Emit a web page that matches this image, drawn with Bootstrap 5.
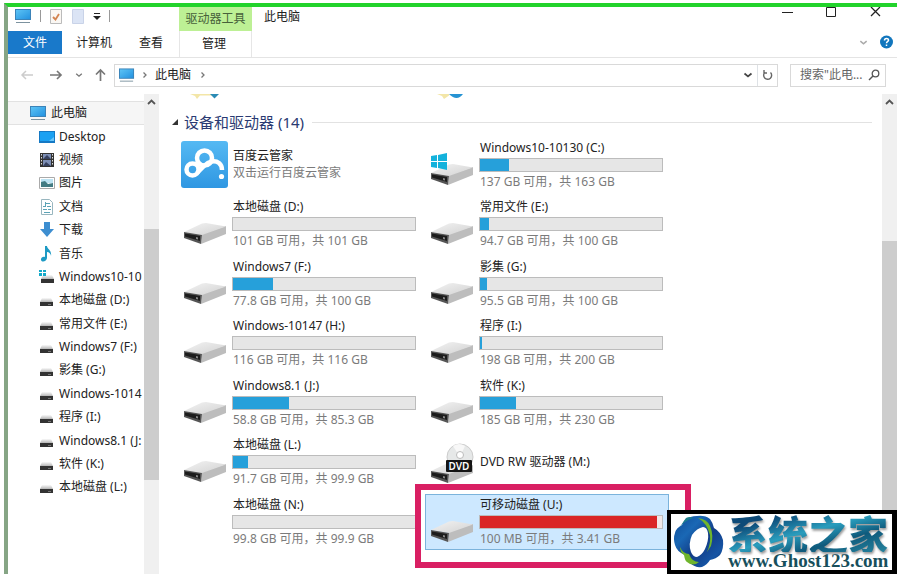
<!DOCTYPE html>
<html lang="zh-CN">
<head>
<meta charset="utf-8">
<meta name="viewport" content="width=device-width, initial-scale=1">
<title>此电脑</title>
<link href="https://cdn.jsdelivr.net/npm/bootstrap@5.3.0/dist/css/bootstrap.min.css" rel="stylesheet">
<style>
body{font-family:"Noto Sans","Noto Sans CJK SC",sans-serif;font-size:12px;line-height:16px;color:#222;background:#fff}
button,input{font:inherit;color:inherit}
button{background:none;border:0;padding:0}
a{color:inherit;text-decoration:none}
svg{display:block;flex:none}
.window{height:100vh;min-height:574px;margin-left:4px;padding-top:3px}
.frame{border-top:4px solid #22d32b;border-left:4px solid #86a585}
.ribbon{border-bottom:1px solid #e4e4e4;height:51px}
.quick{width:171px}
.quick-row{height:24px;padding:0 0 6px 7px}
.tab-row{height:23px}
.tab-row button{margin-right:14px}
.tab-row .file-tab{width:54px;background:#1979ca;color:#fff}
.tab-row .wide{margin-right:27px}
.sep{width:1px;height:12px;background:#999}
.ctx{width:73px}
.ctx-top{height:24px;background:#bdf095;color:#47613a}
.ctx-tab{height:26px;border:solid #e6e6e6;border-width:0 1px}
.ctx-tab span{margin-right:3px}
.win-title{padding-top:2px}
.win-btns button{width:44px;height:20px}
.address{height:36px;padding:0 11px 2px 12px}
.box{border:1px solid #d9d9d9;height:23px}
.nav-btn{width:29px}
.nav-small{padding-right:12px}
.search{width:96px;padding-left:9px;margin-left:12px}
.search input{width:64px;border:0;padding:0;outline:0;background:none;color:#555}
.search input::placeholder{color:#666;opacity:1}
.side{width:136px;padding-top:7px}
.side a{white-space:nowrap;overflow:hidden}
.side-root{height:24px;background:#f6f6f6;border:solid #e2e2e2;border-width:1px 0;padding-left:22px;gap:4px}
.side-list{min-height:374px;padding-left:31px}
.side-list a{gap:4px}
.track{width:15px;background:#f0f0f0}
.track button{height:17px}
.thumb{background:#cdcdcd}
.side-track .before{flex:118}
.side-track .thumb{flex:251}
.side-track .after{flex:94}
.main-track .before{flex:130}
.main-track .thumb{flex:333}
.folders{height:6px;padding-left:31px;gap:217px}
.group{font-size:15px;line-height:20px;color:#2a3a72;padding:0 10px 0 12px;margin-top:12px;height:20px}
.group-line{height:1px;background:#e2e2e2}
.drives{display:grid;grid-template-columns:repeat(auto-fill,247px);grid-auto-rows:1fr;min-height:416px;padding-left:19px;margin-top:5px}
.drive{display:flex;position:relative;width:244px;height:56px;border:1px solid transparent;padding:0 4px 0 2px;gap:3px}
.drive-text{padding:2px 0;flex:1}
.drive-text span{display:block;padding-left:1px;white-space:nowrap}
.sub{color:#7b7b7b;line-height:18px}
.progress{--bs-progress-height:14px;--bs-progress-bg:#e6e6e6;--bs-progress-border-radius:0;--bs-progress-bar-bg:#26a0da;border:1px solid #bcbcbc;margin:2px 0 1px;width:184px}
.picked{background:#cde8ff;border-color:#7bb3dc}
.picked .progress{--bs-progress-bar-bg:#da2626;--bs-progress-bg:#f1e8e8}
.callout{position:absolute;left:-11px;top:-11px;right:-23px;bottom:-19px;border:6px solid #d91f63}
.brand{position:absolute;right:0;bottom:0;width:230px;height:64px;border:4px solid #000;border-right-width:5px;background:#fff}
.brand-name{font:900 40px/38px "Noto Sans CJK SC",sans-serif;background:linear-gradient(165deg,#0d4a78 20%,#2a9dbd 48%,#0f5a7c 70%,#2685a0);-webkit-background-clip:text;background-clip:text;color:transparent;filter:drop-shadow(1px 2px 1px #999)}
.brand-url{font:700 19px/18px "Liberation Serif",serif;color:#174f5c}
</style>
<script src="https://cdn.jsdelivr.net/npm/bootstrap@5.3.0/dist/js/bootstrap.bundle.min.js"></script>
</head>
<body>
<svg width="0" height="0" class="position-absolute" aria-hidden="true">
  <defs>
    <linearGradient id="screen" x2="1" y2="1"><stop stop-color="#5cc3f5"/><stop offset="1" stop-color="#2492e0"/></linearGradient>
    <linearGradient id="lid" x2="1" y2="1"><stop stop-color="#f3f3f3"/><stop offset="1" stop-color="#d2d2d2"/></linearGradient>
    <linearGradient id="sky" x2="0" y2="1"><stop stop-color="#55b9f3"/><stop offset="1" stop-color="#2f97e2"/></linearGradient>
    <linearGradient id="mini" x2="0" y2="1"><stop stop-color="#fafafa"/><stop offset="1" stop-color="#b5b5b5"/></linearGradient>
  </defs>
  <symbol id="pc" viewBox="0 0 17 15"><path fill="#3b83b8" d="M0 0h16v11H0z"/><path fill="url(#screen)" d="M1 1h14v9H1z"/><path stroke="#7c929f" d="M1 13.500h14"/></symbol>
  <symbol id="disk" viewBox="0 0 48 53"><path fill="#bdbdbd" d="M21 37 45 29v8L20 47z"/><path fill="url(#lid)" d="M3 35 21 26.500l4-.5 20 3.500L21 38z"/><path fill="#555" d="m3 35 18 3-1 9-17-6z"/><path fill="#1c1c1c" d="m4 36.500 15 2.500v5L4 39.500z"/><path fill="#888" d="m15 40 2 .5v2l-2-.5z"/></symbol>
  <symbol id="mini-disk" viewBox="0 0 16 16"><path fill="url(#mini)" d="M3 6h9l2 4H1z"/><path fill="#333" d="M1 10h13v4H1z"/><path stroke="#777" d="M9 12.500h3"/></symbol>
  <symbol id="flag" viewBox="0 0 16 17"><path fill="#13b2dc" d="M0 3l6-1v6H0zM7 2l9-2v8H7zM0 9h6v6l-6-1zM7 9h9v8l-9-2z"/></symbol>
  <symbol id="down" viewBox="0 0 10 10"><path fill="none" stroke="currentColor" stroke-width="1.700" d="m1.500 3.500 3.500 3 3.500-3"/></symbol>
  <symbol id="right" viewBox="0 0 8 10"><path fill="none" stroke="#777" stroke-width="1.300" d="m2.500 2.500 2.500 2.500-2.500 2.500"/></symbol>
  <symbol id="arrow" viewBox="0 0 14 14"><path fill="none" stroke="currentColor" stroke-width="1.700" d="M1 7h11M8 3l4 4-4 4"/></symbol>
</svg>

<div class="window"><div class="frame h-100 d-flex flex-column position-relative overflow-hidden">
  <header class="ribbon d-flex">
    <div class="quick">
      <div class="quick-row d-flex align-items-center">
        <svg width="17" height="15"><use href="#pc"/></svg>
        <span class="sep ms-2"></span>
        <button class="ms-2" aria-label="属性"><svg width="14" height="15" viewBox="0 0 14 15"><path fill="#faf7f3" stroke="#bbb" d="M1.500.5h11v14h-11z"/><path fill="none" stroke="#d38451" stroke-width="1.800" d="m4 8 2.500 2.500L10 5"/></svg></button>
        <button class="ms-2" aria-label="新建文件夹"><svg width="14" height="15" viewBox="0 0 14 15"><path fill="#dbe4f5" stroke="#c9d3e8" d="M1.500.5h11v14h-11z"/></svg></button>
        <button class="ms-2" aria-label="自定义快速访问工具栏"><svg width="8" height="8" viewBox="0 0 8 8"><path stroke="#222" d="M1 1.500h6"/><path fill="#222" d="M0 4h8L4 8z"/></svg></button>
        <span class="sep ms-2"></span>
      </div>
      <nav class="tab-row d-flex align-items-stretch">
        <button class="file-tab">文件</button>
        <button class="wide">计算机</button>
        <button>查看</button>
      </nav>
    </div>
    <div class="ctx">
      <div class="ctx-top d-flex align-items-center justify-content-center">驱动器工具</div>
      <button class="ctx-tab w-100"><span>管理</span></button>
    </div>
    <div class="flex-fill d-flex flex-column justify-content-between">
      <div class="d-flex justify-content-between">
        <span class="win-title ps-2 ms-1">此电脑</span>
        <div class="win-btns d-flex">
          <button aria-label="最小化"><svg class="mx-auto mb-2 pb-1" width="11" height="15"><path stroke="#222" d="M0 5.500h11"/></svg></button>
          <button aria-label="最大化"><svg class="mx-auto mb-2 pb-1" width="11" height="15"><path fill="none" stroke="#222" d="M.500.500h9v9h-9z"/></svg></button>
          <button aria-label="关闭"><svg class="mx-auto mb-2 pb-1" width="11" height="15"><path stroke="#222" stroke-width="1.300" d="m1 0 9 9m0-9-9 9"/></svg></button>
        </div>
      </div>
      <div class="d-flex justify-content-end align-items-center gap-2 pb-1 mb-1">
        <button class="me-1" aria-label="展开功能区"><svg width="9" height="9" color="#aaa"><use href="#down"/></svg></button>
        <button aria-label="帮助"><svg class="me-1" width="13" height="14" viewBox="0 0 13 14"><circle cx="6.500" cy="7" r="6.500" fill="#1176bd"/><path fill="none" stroke="#fff" stroke-width="1.500" d="M4.500 5.500C4.500 3 8.500 3 8.500 5.200 8.500 6.500 6.500 6.500 6.500 8.300M6.500 9.500V11"/></svg></button>
      </div>
    </div>
  </header>

  <div class="address d-flex align-items-center">
    <button class="nav-btn" aria-label="后退"><svg width="14" height="14" viewBox="0 0 14 14" color="#ccc"><path fill="none" stroke="currentColor" stroke-width="1.500" d="M13 7H2m4-4L2 7l4 4"/></svg></button>
    <button class="nav-small" aria-label="前进"><svg width="14" height="14" color="#777"><use href="#arrow"/></svg></button>
    <button class="nav-small" aria-label="最近位置"><svg width="8" height="8" color="#777"><use href="#down"/></svg></button>
    <button class="pe-2" aria-label="向上"><svg width="11" height="14" viewBox="0 0 11 14" color="#777"><path fill="none" stroke="currentColor" stroke-width="1.700" d="M5.500 13V2M1 6.500 5.500 2 10 6.500"/></svg></button>
    <div class="box flex-fill d-flex align-items-center ps-1">
      <svg width="16" height="15"><use href="#pc"/></svg>
      <svg class="ms-1" width="12" height="10"><use href="#right"/></svg>
      <a class="ps-1" href="#">此电脑</a>
      <svg class="ms-2" width="8" height="10"><use href="#right"/></svg>
      <button class="ms-auto me-1" aria-label="历史记录"><svg width="10" height="10" color="#444"><use href="#down"/></svg></button>
      <button class="border-start h-100 px-1" aria-label="刷新"><svg width="11" height="12" viewBox="0 0 11 12"><path fill="none" stroke="#666" stroke-width="1.400" d="M8.500 3.500A4 4 0 1 1 3 3.300M2 1v3h3"/></svg></button>
    </div>
    <label class="box search d-flex align-items-center"><input type="text" placeholder="搜索&quot;此电..." aria-label="搜索此电脑"><svg class="ms-1" width="12" height="12" viewBox="0 0 12 12"><circle cx="7.500" cy="4.500" r="3.300" fill="none" stroke="#555" stroke-width="1.300"/><path stroke="#555" stroke-width="1.500" d="M5 7 1 11"/></svg></label>
  </div>

  <div class="d-flex flex-fill">
    <nav class="side">
      <a class="side-root d-flex align-items-center" href="#"><svg width="17" height="15"><use href="#pc"/></svg>此电脑</a>
      <div class="side-list d-flex flex-column">
        <a class="d-flex flex-fill align-items-center" href="#"><svg width="16" height="16" viewBox="0 0 16 16"><path fill="#1579c4" d="M0 2h16v12H0z"/><path fill="#1ba1f2" d="M1 3h14v9H1z"/><path fill="#6bc6fa" d="m10 12 5-4v4z"/></svg>Desktop</a>
        <a class="d-flex flex-fill align-items-center" href="#"><svg width="16" height="16" viewBox="0 0 16 16"><path fill="#333" d="M1 1h14v14H1z"/><path fill="#7d8fb6" d="M4 2h8v5H4zM4 8h8v6H4z"/><path fill="#36415f" d="m4 7 4-4 4 4zM4 14l3-4 5 4z"/><path stroke="#ddd" stroke-dasharray="1.500" d="M2.500 2v12M13.500 2v12"/></svg>视频</a>
        <a class="d-flex flex-fill align-items-center" href="#"><svg width="16" height="16" viewBox="0 0 16 16"><path fill="#fff" stroke="#aaa" d="M.500 2.500h15v11H.500z"/><path fill="#bce3f3" d="M2 4h12v4H2z"/><path fill="#427b83" d="m2 7 4-1 3 3 5-1v4H2z"/></svg>图片</a>
        <a class="d-flex flex-fill align-items-center" href="#"><svg width="16" height="16" viewBox="0 0 16 16"><path fill="#fff" stroke="#98b6bf" d="M2.500.500h8l3 3v12h-11z"/><path stroke="#5ba3b6" d="M7 4.500h4M4 7.500h3M8 7.500h4M4 10.500h4M9 10.500h3M5 13.500h6M6.500 3v4"/></svg>文档</a>
        <a class="d-flex flex-fill align-items-center" href="#"><svg width="16" height="16" viewBox="0 0 16 16"><path fill="#3d8ed0" d="M5 0h6v7h4l-7 8-7-8h4z"/></svg>下载</a>
        <a class="d-flex flex-fill align-items-center" href="#"><svg width="16" height="16" viewBox="0 0 16 16"><path fill="#1d9ac4" d="M6 0h2c0 3 5 4 4 10 0-2-2-4-4-4v6c0 3-5 5-6 2-.5-2 2-4 4-3z"/></svg>音乐</a>
        <a class="d-flex flex-fill align-items-center" href="#"><svg width="16" height="16" viewBox="0 0 16 16"><path fill="url(#mini)" d="M4 6h9l2 4H2z"/><path fill="#333" d="M2 10h13v4H2z"/><path fill="#13a9c9" d="M0 1h3v2H0zM4 1h3v2H4zM0 4h3v3H0zM4 4h3v3H4z"/></svg>Windows10-10</a>
        <a class="d-flex flex-fill align-items-center" href="#"><svg width="16" height="16"><use href="#mini-disk"/></svg>本地磁盘 (D:)</a>
        <a class="d-flex flex-fill align-items-center" href="#"><svg width="16" height="16"><use href="#mini-disk"/></svg>常用文件 (E:)</a>
        <a class="d-flex flex-fill align-items-center" href="#"><svg width="16" height="16"><use href="#mini-disk"/></svg>Windows7 (F:)</a>
        <a class="d-flex flex-fill align-items-center" href="#"><svg width="16" height="16"><use href="#mini-disk"/></svg>影集 (G:)</a>
        <a class="d-flex flex-fill align-items-center" href="#"><svg width="16" height="16"><use href="#mini-disk"/></svg>Windows-1014</a>
        <a class="d-flex flex-fill align-items-center" href="#"><svg width="16" height="16"><use href="#mini-disk"/></svg>程序 (I:)</a>
        <a class="d-flex flex-fill align-items-center" href="#"><svg width="16" height="16"><use href="#mini-disk"/></svg>Windows8.1 (J:</a>
        <a class="d-flex flex-fill align-items-center" href="#"><svg width="16" height="16"><use href="#mini-disk"/></svg>软件 (K:)</a>
        <a class="d-flex flex-fill align-items-center" href="#"><svg width="16" height="16"><use href="#mini-disk"/></svg>本地磁盘 (L:)</a>
      </div>
    </nav>
    <div class="track side-track d-flex flex-column"><button aria-label="向上滚动"><svg class="mx-auto" width="9" height="9" viewBox="0 0 9 9"><path fill="none" stroke="#555" stroke-width="1.800" d="m1 6 3.500-3.500L8 6"/></svg></button><div class="before"></div><div class="thumb"></div><div class="after"></div></div>

    <main class="flex-fill">
      <div class="folders d-flex">
        <svg width="30" height="6" viewBox="0 0 30 6"><path fill="#f3e6a8" d="M0 0h22v1.500H10L7 5 5 2z"/><path fill="#2b8bb5" d="M20 0h9l-4.500 4.500z"/></svg>
        <svg width="30" height="6" viewBox="0 0 30 6"><path fill="#f3e6a8" d="M0 0h12v1.500L7 5 5 2z"/><path fill="#2693d3" d="M12 0h14q-6 8-14 0z"/></svg>
      </div>
      <h1 class="group d-flex align-items-center mb-0 fw-normal"><svg class="me-1" width="9" height="8"><path fill="#333" d="M7 1v6H1z"/></svg><span class="me-2">设备和驱动器 (14)</span><span class="group-line flex-fill"></span></h1>
      <div class="drives">
        <a class="drive" href="#"><svg width="48" height="53" viewBox="0 0 48 53"><rect y="3" width="47" height="47" rx="3" fill="url(#sky)"/><g fill="none" stroke="#fff" stroke-width="4.500"><circle cx="11.500" cy="31.500" r="6"/><circle cx="23.500" cy="20" r="7.500"/><path d="m16 35 7-7c5-5 11-6 15-3 2.500 2 3 4 3 7"/></g><circle cx="40.500" cy="38.500" r="2.600" fill="#fff"/></svg>
          <div class="drive-text align-self-center"><span>百度云管家</span><span class="sub">双击运行百度云管家</span></div></a>
        <a class="drive" href="#"><svg width="48" height="53"><use href="#disk"/><use href="#flag" x="3" y="15" width="16" height="17"/></svg>
          <div class="drive-text"><span>Windows10-10130 (C:)</span><div class="progress"><div class="progress-bar" style="width:16%"></div></div><span class="sub">137 GB 可用，共 163 GB</span></div></a>
        <a class="drive" href="#"><svg width="48" height="53"><use href="#disk"/></svg>
          <div class="drive-text"><span>本地磁盘 (D:)</span><div class="progress"><div class="progress-bar" style="width:0%"></div></div><span class="sub">101 GB 可用，共 101 GB</span></div></a>
        <a class="drive" href="#"><svg width="48" height="53"><use href="#disk"/></svg>
          <div class="drive-text"><span>常用文件 (E:)</span><div class="progress"><div class="progress-bar" style="width:5%"></div></div><span class="sub">94.7 GB 可用，共 100 GB</span></div></a>
        <a class="drive" href="#"><svg width="48" height="53"><use href="#disk"/></svg>
          <div class="drive-text"><span>Windows7 (F:)</span><div class="progress"><div class="progress-bar" style="width:22%"></div></div><span class="sub">77.8 GB 可用，共 100 GB</span></div></a>
        <a class="drive" href="#"><svg width="48" height="53"><use href="#disk"/></svg>
          <div class="drive-text"><span>影集 (G:)</span><div class="progress"><div class="progress-bar" style="width:4%"></div></div><span class="sub">95.5 GB 可用，共 100 GB</span></div></a>
        <a class="drive" href="#"><svg width="48" height="53"><use href="#disk"/></svg>
          <div class="drive-text"><span>Windows-10147 (H:)</span><div class="progress"><div class="progress-bar" style="width:0%"></div></div><span class="sub">116 GB 可用，共 116 GB</span></div></a>
        <a class="drive" href="#"><svg width="48" height="53"><use href="#disk"/></svg>
          <div class="drive-text"><span>程序 (I:)</span><div class="progress"><div class="progress-bar" style="width:1%"></div></div><span class="sub">198 GB 可用，共 200 GB</span></div></a>
        <a class="drive" href="#"><svg width="48" height="53"><use href="#disk"/></svg>
          <div class="drive-text"><span>Windows8.1 (J:)</span><div class="progress"><div class="progress-bar" style="width:31%"></div></div><span class="sub">58.8 GB 可用，共 85.3 GB</span></div></a>
        <a class="drive" href="#"><svg width="48" height="53"><use href="#disk"/></svg>
          <div class="drive-text"><span>软件 (K:)</span><div class="progress"><div class="progress-bar" style="width:20%"></div></div><span class="sub">185 GB 可用，共 230 GB</span></div></a>
        <a class="drive" href="#"><svg width="48" height="53"><use href="#disk"/></svg>
          <div class="drive-text"><span>本地磁盘 (L:)</span><div class="progress"><div class="progress-bar" style="width:8%"></div></div><span class="sub">91.7 GB 可用，共 99.9 GB</span></div></a>
        <a class="drive" href="#"><svg width="48" height="53"><circle cx="32" cy="22" r="13" fill="#e6e8e8" stroke="#ccc"/><path fill="#f8f8f8" d="m32 22-7-11q6-4 12 0z"/><circle cx="32" cy="20" r="3.500" fill="#fff" stroke="#bbb"/><use href="#disk" y="1"/><rect x="18" y="25" width="26" height="12" rx="1" fill="#151515"/><text x="31" y="35" text-anchor="middle" font-size="10" font-weight="600" fill="#fff">DVD</text></svg>
          <div class="drive-text align-self-center"><span>DVD RW 驱动器 (M:)</span></div></a>
        <a class="drive" href="#"><svg width="48" height="53"></svg>
          <div class="drive-text"><span>本地磁盘 (N:)</span><div class="progress"><div class="progress-bar" style="width:0%"></div></div><span class="sub">99.8 GB 可用，共 99.9 GB</span></div></a>
        <a class="drive picked" href="#"><svg width="48" height="53"><use href="#disk"/></svg>
          <div class="drive-text"><span>可移动磁盘 (U:)</span><div class="progress"><div class="progress-bar" style="width:97%"></div></div><span class="sub">100 MB 可用，共 3.41 GB</span></div><i class="callout"></i></a>
      </div>
    </main>
    <div class="track main-track d-flex flex-column"><button aria-label="向上滚动"><svg class="mx-auto" width="9" height="9" viewBox="0 0 9 9"><path fill="none" stroke="#555" stroke-width="1.800" d="m1 6 3.500-3.500L8 6"/></svg></button><div class="before"></div><div class="thumb"></div></div>
  </div>

  <a class="brand d-flex align-items-center gap-1" href="#">
    <svg width="53" height="56" viewBox="0 0 53 56"><defs><linearGradient id="ring" x1="0" y1="0" x2="1" y2="1"><stop stop-color="#0e4a96"/><stop offset=".3" stop-color="#1a68b5"/><stop offset=".55" stop-color="#123c86"/><stop offset=".8" stop-color="#1554a4"/><stop offset="1" stop-color="#0c2f70"/></linearGradient></defs>
      <path fill="url(#ring)" fill-rule="evenodd" d="M14 6q5-4 12-4 8-1 13 3 3 4 4 9 7 4 9 12 1 9-3 15-4 4-10 5-3 5-8 7-7 1-12-4-4-3-5-8-8-3-10-10-2-7 0-12 1-5 7-8 1-3 3-5zM21 21q-4 9-1 17 2 5 6 5 5-2 8-8 4-9 3-16-1-6-5-6-6 1-11 8z"/>
      <path fill="#6fb52c" d="M27 4q9 1 12 8 4 9 1 20l-4 6q4-9 3-17-3-12-12-17zM9 33q3 7 9 7 3 8 10 8-6 5-12 0-2-1-3-7-4-3-4-8z"/>
      <path fill="#1d7f8c" d="M22 4q-9 3-14 10l7-10q4-2 7 0z"/></svg>
    <span><span class="brand-name d-block">系统之家</span><span class="brand-url d-block">www.Ghost123.com</span></span>
  </a>
</div></div>
</body>
</html>
